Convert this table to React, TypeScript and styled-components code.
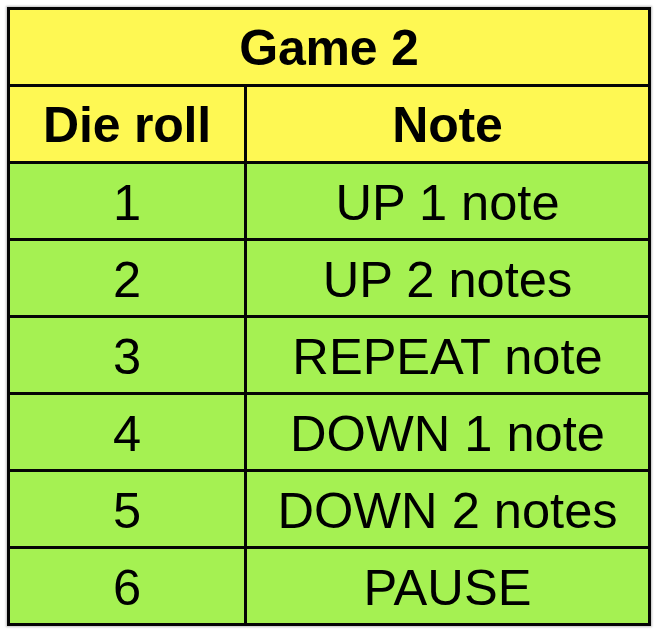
import React from "react";
import styled, { createGlobalStyle } from "styled-components";

const GlobalStyle = createGlobalStyle`
  html, body {
    margin: 0;
    padding: 0;
    background: #ffffff;
  }
  body {
    font-family: "Liberation Sans", Arial, Helvetica, sans-serif;
  }
`;

const Page = styled.div`
  width: 660px;
  height: 636px;
  padding: 7px 0 0 7px;
  box-sizing: border-box;
`;

const Grid = styled.div`
  display: grid;
  grid-template-columns: 234px 401px;
  grid-auto-rows: 74px;
  gap: 3px;
  padding: 3px;
  width: 644px;
  box-sizing: border-box;
  background: #050505;
  box-shadow: 0 0 2px 1px rgba(0, 0, 0, 0.25);
`;

const Cell = styled.div<{ $head?: boolean; $span?: boolean }>`
  display: flex;
  align-items: center;
  justify-content: center;
  background: ${(p) => (p.$head ? "#fef853" : "#a5f152")};
  color: #000;
  font-size: ${(p) => (p.$head ? "50px" : "50.6px")};
  font-weight: ${(p) => (p.$head ? 700 : 400)};
  letter-spacing: ${(p) => (p.$head ? "-0.2px" : "0")};
  grid-column: ${(p) => (p.$span ? "1 / span 2" : "auto")};
  padding-top: 2px;
  box-sizing: border-box;
`;

const rows: [string, string][] = [
  ["1", "UP 1 note"],
  ["2", "UP 2 notes"],
  ["3", "REPEAT note"],
  ["4", "DOWN 1 note"],
  ["5", "DOWN 2 notes"],
  ["6", "PAUSE"],
];

const App = () => {
  return (
    <Page>
      <GlobalStyle />
      <Grid>
        <Cell $head $span>Game 2</Cell>
        <Cell $head>Die roll</Cell>
        <Cell $head>Note</Cell>
        {rows.map(([roll, note]) => (
          <React.Fragment key={roll}>
            <Cell>{roll}</Cell>
            <Cell>{note}</Cell>
          </React.Fragment>
        ))}
      </Grid>
    </Page>
  );
};

export default App;
